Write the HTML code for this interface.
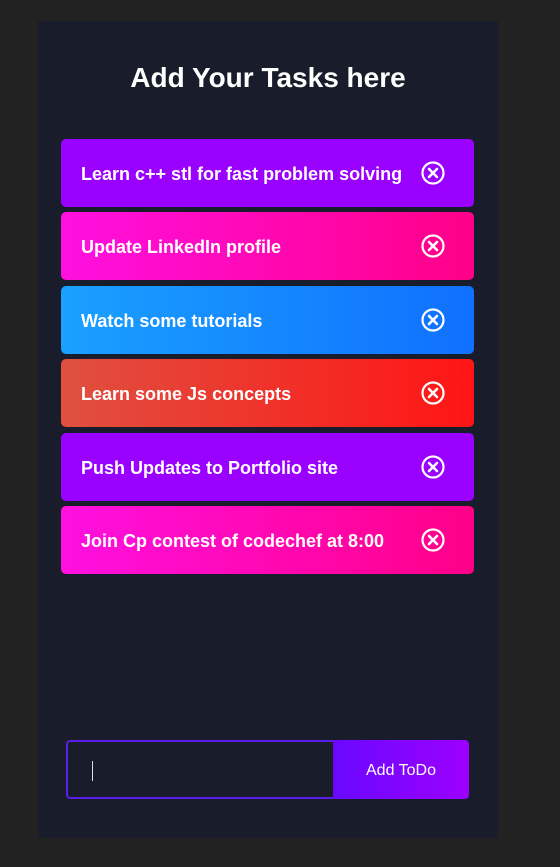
<!DOCTYPE html>
<html><head><style>
body{margin:0;width:560px;height:867px;background:#222222;font-family:"Liberation Sans",sans-serif;position:relative;overflow:hidden}
.c{position:absolute;left:38px;top:21px;width:460px;height:817px;background:#191c2a}
h1{position:absolute;left:0;width:460px;top:41px;margin:0;text-align:center;color:#fff;font-size:28px;font-weight:bold}
.it{position:absolute;left:23px;width:413px;height:68px;border-radius:5px;color:#fff;font-size:18px;font-weight:bold;line-height:70px;text-indent:20px}
.it svg{position:absolute;left:360px;top:22px}
.inp{position:absolute;left:28px;top:719px;width:403px;height:59px;border-radius:4px;overflow:hidden}
.f{position:absolute;left:0;top:0;width:265px;height:55px;border:2px solid #5a1ee8;border-right:none;border-radius:4px 0 0 4px;background:#191c2a}
.f i{position:absolute;left:24px;top:19px;width:1px;height:20px;background:#ddd}
.b{position:absolute;left:267px;top:0;width:136px;height:59px;background:linear-gradient(90deg,#6a08ff,#9c00ff);color:#fff;font-size:16px;line-height:61px;text-align:center}
</style></head><body>
<div class="c">
<h1>Add Your Tasks here</h1>
<div class="it" style="top:118px;background:#9900ff">Learn c++ stl for fast problem solving<svg width="24" height="24" viewBox="0 0 24 24"><circle cx="12" cy="12" r="10.5" fill="none" stroke="#fff" stroke-width="2.2"/><path d="M8 8L16 16M16 8L8 16" stroke="#fff" stroke-width="2.6" stroke-linecap="round"/></svg></div>
<div class="it" style="top:191px;background:linear-gradient(90deg,#ff10e0,#ff0088)">Update LinkedIn profile<svg width="24" height="24" viewBox="0 0 24 24"><circle cx="12" cy="12" r="10.5" fill="none" stroke="#fff" stroke-width="2.2"/><path d="M8 8L16 16M16 8L8 16" stroke="#fff" stroke-width="2.6" stroke-linecap="round"/></svg></div>
<div class="it" style="top:265px;background:linear-gradient(90deg,#1aa0ff,#1070ff)">Watch some tutorials<svg width="24" height="24" viewBox="0 0 24 24"><circle cx="12" cy="12" r="10.5" fill="none" stroke="#fff" stroke-width="2.2"/><path d="M8 8L16 16M16 8L8 16" stroke="#fff" stroke-width="2.6" stroke-linecap="round"/></svg></div>
<div class="it" style="top:338px;background:linear-gradient(90deg,#df5040,#ff1515)">Learn some Js concepts<svg width="24" height="24" viewBox="0 0 24 24"><circle cx="12" cy="12" r="10.5" fill="none" stroke="#fff" stroke-width="2.2"/><path d="M8 8L16 16M16 8L8 16" stroke="#fff" stroke-width="2.6" stroke-linecap="round"/></svg></div>
<div class="it" style="top:412px;background:#9900ff">Push Updates to Portfolio site<svg width="24" height="24" viewBox="0 0 24 24"><circle cx="12" cy="12" r="10.5" fill="none" stroke="#fff" stroke-width="2.2"/><path d="M8 8L16 16M16 8L8 16" stroke="#fff" stroke-width="2.6" stroke-linecap="round"/></svg></div>
<div class="it" style="top:485px;background:linear-gradient(90deg,#ff10e0,#ff0088)">Join Cp contest of codechef at 8:00<svg width="24" height="24" viewBox="0 0 24 24"><circle cx="12" cy="12" r="10.5" fill="none" stroke="#fff" stroke-width="2.2"/><path d="M8 8L16 16M16 8L8 16" stroke="#fff" stroke-width="2.6" stroke-linecap="round"/></svg></div>
<div class="inp"><div class="f"><i></i></div><div class="b">Add ToDo</div></div>
</div>
</body></html>
